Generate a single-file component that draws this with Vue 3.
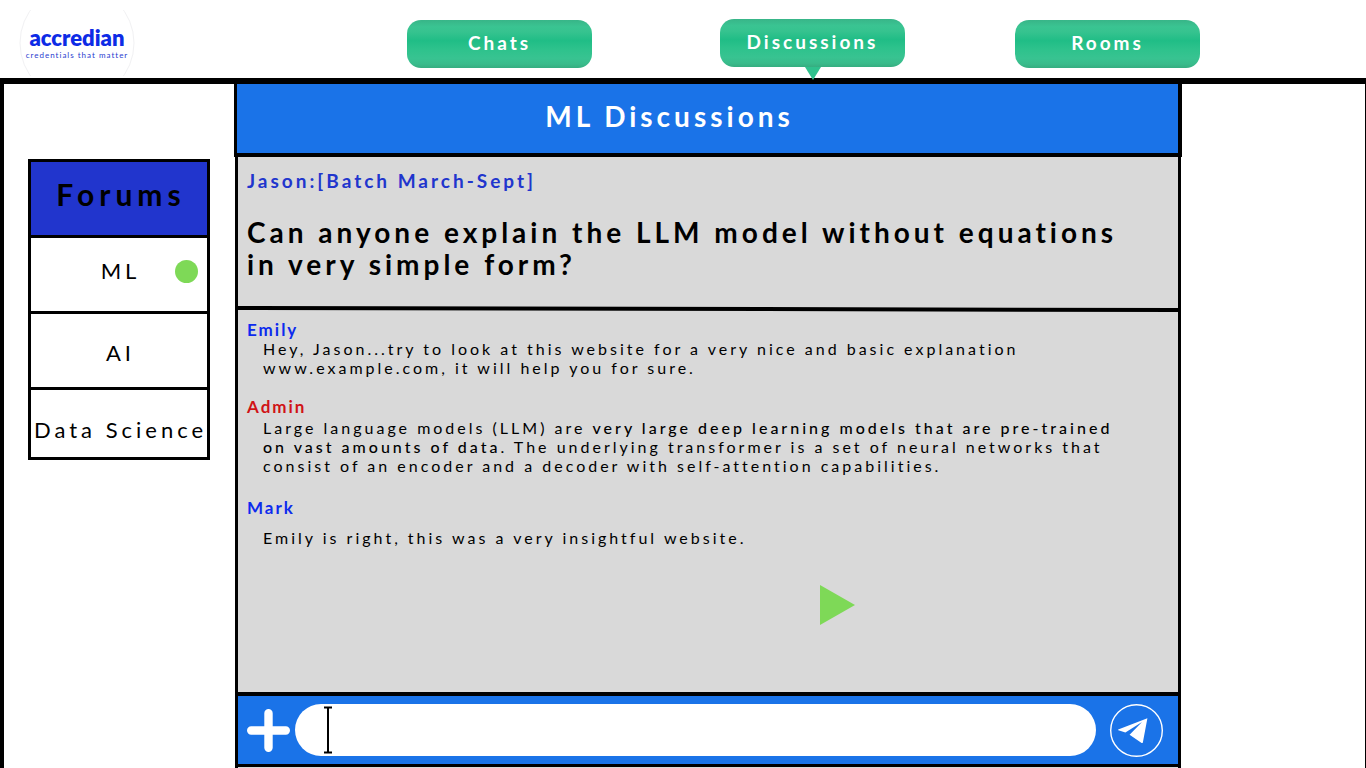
<script setup>
import { ref } from 'vue'

const tabs = ['Chats', 'Discussions', 'Rooms']
const activeTab = ref('Discussions')
const forums = ['ML', 'AI', 'Data Science']
const activeForum = ref('ML')
const draft = ref('')
</script>

<template>
  <div class="page">
    <header class="topbar">
      <a class="logo" href="#" aria-label="accredian home">
        <svg class="logo-ring" viewBox="0 0 116 66" aria-hidden="true">
          <circle cx="58" cy="33" r="57" fill="none" stroke="#f1f1f3" stroke-width="1" />
        </svg>
        <span class="logo-name">accredian</span>
        <span class="logo-tag">credentials that matter</span>
      </a>
      <button
        v-for="tab in tabs"
        :key="tab"
        type="button"
        class="tab"
        :class="{ active: tab === activeTab }"
        @click="activeTab = tab"
      >{{ tab }}</button>
    </header>

    <main class="content">
      <nav class="side" aria-label="Forums">
        <div class="forums">
          <h2 class="forums-title">Forums</h2>
          <button
            v-for="forum in forums"
            :key="forum"
            type="button"
            class="forum"
            @click="activeForum = forum"
          >{{ forum }}<span v-if="forum === activeForum" class="dot"></span></button>
        </div>
      </nav>

      <section class="panel">
        <h1 class="panel-title">ML Discussions</h1>
        <div class="panel-body">
          <article class="question">
            <p class="asker">Jason:[Batch March-Sept]</p>
            <h2 class="ask">Can anyone explain the LLM model without equations<br>in very simple form?</h2>
          </article>
          <svg class="divider" viewBox="0 0 940 6" preserveAspectRatio="none" aria-hidden="true">
            <path d="M0 0 L940 2 V6 L0 4 Z" fill="#000" />
          </svg>
          <div class="thread">
            <article class="reply">
              <h3 class="author">Emily</h3>
              <p class="text">Hey, Jason...try to look at this website for a very nice and basic explanation<br>www.example.com, it will help you for sure.</p>
            </article>
            <article class="reply">
              <h3 class="author admin">Admin</h3>
              <p class="text">Large language models (LLM) are <b>very large deep learning models that are pre-trained<br>on vast amounts of data</b>. The underlying transformer is a set of neural networks that<br>consist of an encoder and a decoder with self-attention capabilities.</p>
            </article>
            <article class="reply spaced">
              <h3 class="author">Mark</h3>
              <p class="text">Emily is right, this was a very insightful website.</p>
            </article>
            <button type="button" class="play" aria-label="Play">
              <svg width="36" height="40" viewBox="0 0 36 40" aria-hidden="true">
                <path d="M1 0 L36 20 L1 40 Z" fill="#7ed957" />
              </svg>
            </button>
          </div>
          <form class="composer" @submit.prevent>
            <button type="button" class="icon-btn" aria-label="Add attachment">
              <svg width="43" height="43" viewBox="0 0 43 43" aria-hidden="true">
                <path d="M21.5 4.2 V38.8 M4.2 21.5 H38.8" stroke="#fff" stroke-width="8.4" stroke-linecap="round" />
              </svg>
            </button>
            <div class="field">
              <input v-model="draft" type="text" class="input" aria-label="Message">
              <svg class="caret" width="8" height="48" viewBox="0 0 8 48" aria-hidden="true">
                <path d="M0 1.5 H8 M4 1.5 V46.5 M0 46.5 H8" stroke="#000" stroke-width="2" fill="none" />
              </svg>
            </div>
            <button type="submit" class="icon-btn" aria-label="Send">
              <svg width="53" height="53" viewBox="0 0 53 53" aria-hidden="true">
                <circle cx="26.5" cy="26.5" r="25.8" fill="none" stroke="#fff" stroke-width="1.4" />
                <path d="M37.4 14.2 L8.2 25.4 Q7.8 25.8 8.4 26.2 L15.4 28.4 L32 18 L19.6 30.8 L31.6 39 Q32.6 39.4 32.9 38.2 Z" fill="#fff" />
              </svg>
            </button>
          </form>
        </div>
      </section>
    </main>
  </div>
</template>

<style>
body {
  background: #fff;
}
</style>

<style scoped>
.page {
  display: flex;
  flex-direction: column;
  min-height: 100vh;
  font-family: Lato, "Open Sans", sans-serif;
  color: #000;
}

.page * {
  box-sizing: border-box;
}

h1, h2, h3, p {
  margin: 0;
}

button {
  font-family: inherit;
  padding: 0;
  border: 0;
  background: none;
  cursor: pointer;
}

svg {
  display: block;
}

.topbar {
  display: grid;
  grid-template-columns: 407fr 313fr 295fr 351fr;
  align-items: start;
  height: 78px;
  padding-top: 10px;
}

.logo {
  position: relative;
  display: flex;
  flex-direction: column;
  align-items: center;
  justify-content: center;
  justify-self: start;
  width: 116px;
  height: 66px;
  margin-left: 19px;
  text-decoration: none;
}

.logo-ring {
  position: absolute;
  inset: 0;
}

.logo-name {
  font-size: 22px;
  line-height: 24px;
  font-weight: 800;
  color: #0d2be6;
}

.logo-tag {
  font-size: 8px;
  line-height: 10px;
  letter-spacing: 1px;
  color: #2a40cf;
  white-space: nowrap;
}

.tab {
  position: relative;
  width: 185px;
  height: 48px;
  padding-bottom: 4px;
  margin-top: 10px;
  border-radius: 14px;
  background: linear-gradient(#38b588 0%, #3ac492 14%, #36c38f 25%, #20bd86 43%, #2dc28c 60%, #38c391 80%, #39bb8b 92%, #35ad80 100%);
  color: #fff;
  font-size: 19px;
  font-weight: 700;
  letter-spacing: 3px;
}

.tab.active {
  margin-top: 9px;
}

.tab.active::after {
  content: "";
  position: absolute;
  top: 100%;
  left: 50%;
  margin-left: -8px;
  border: 8px solid transparent;
  border-top: 13px solid #2fc18d;
  border-bottom: 0;
}

.content {
  display: grid;
  grid-template-columns: 230px minmax(0, 1fr) 183px;
  flex: 1;
  border: solid #000;
  border-width: 6px 1px 0 4px;
}

.side {
  padding: 75px 24px 0;
}

.forums {
  display: grid;
  grid-template-columns: minmax(0, 1fr);
  gap: 3px;
  border: 3px solid #000;
  background: #000;
}

.forums-title {
  padding: 10px 0 19px 4px;
  background: #2135cd;
  font-size: 30px;
  line-height: 44px;
  letter-spacing: 5px;
  text-align: center;
}

.forum {
  position: relative;
  height: 73px;
  padding: 4px 0 0 3px;
  background: #fff;
  color: #000;
  font-size: 22px;
  letter-spacing: 4px;
  white-space: nowrap;
}

.forum:nth-of-type(1) {
  padding: 0 0 8px 3px;
}

.forum:last-child {
  height: 67px;
  padding: 12px 0 0 3px;
}

.dot {
  position: absolute;
  top: 22px;
  right: 9px;
  width: 23px;
  height: 23px;
  border-radius: 50%;
  background: #7ed957;
}

.panel {
  display: flex;
  flex-direction: column;
}

.panel-title {
  padding: 12px 76px 17px 0;
  border: solid #000;
  border-width: 0 4px 4px 3px;
  background: #1a73e8;
  color: #fff;
  font-size: 28px;
  line-height: 40px;
  letter-spacing: 4px;
  text-align: center;
}

.panel-body {
  display: flex;
  flex-direction: column;
  flex: 1;
  margin: 0 1px;
  border: solid #000;
  border-width: 0 3px;
  background: #d9d9d9;
}

.question {
  padding: 12px 9px 26px;
}

.asker {
  color: #2135cd;
  font-size: 19px;
  line-height: 24px;
  font-weight: 700;
  letter-spacing: 3px;
}

.ask {
  margin-top: 23px;
  font-size: 28px;
  line-height: 32px;
  letter-spacing: 4px;
}

.divider {
  width: 100%;
  height: 6px;
}

.thread {
  flex: 1;
  padding: 8px 9px 0;
}

.reply {
  margin-bottom: 20px;
}

.author {
  color: #0d2bee;
  font-size: 17px;
  line-height: 19px;
  letter-spacing: 2px;
}

.author.admin {
  color: #d01317;
}

.text {
  padding-left: 16px;
  font-size: 16px;
  line-height: 19px;
  letter-spacing: 3px;
}

.text b {
  font-weight: 500;
}

.author.admin + .text {
  padding-top: 2px;
  padding-bottom: 3px;
}

.reply.spaced .text {
  margin-top: 11px;
}

.play {
  margin: 18px 0 0 62%;
}

.composer {
  display: flex;
  align-items: center;
  height: 75px;
  padding: 0 15px 0 9px;
  margin-bottom: 1px;
  border: solid #000;
  border-width: 4px 0 3px;
  background: #1a73e8;
}

.field {
  position: relative;
  flex: 1;
  margin: 0 14px 0 5px;
}

.input {
  display: block;
  width: 100%;
  height: 52px;
  padding: 0 40px;
  border: 0;
  border-radius: 26px;
  background: #fff;
  font: inherit;
  outline: 0;
}

.caret {
  position: absolute;
  top: 2px;
  left: 29px;
}
</style>
